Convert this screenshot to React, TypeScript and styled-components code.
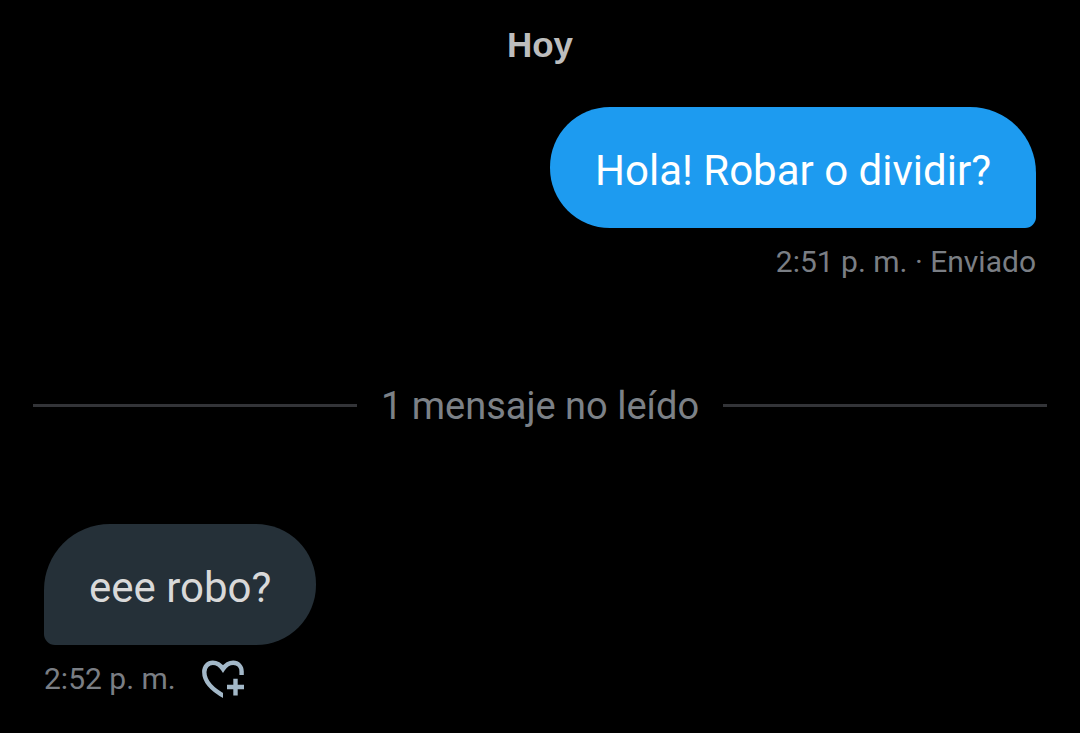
import React from "react";
import styled, { createGlobalStyle } from "styled-components";

const GlobalStyle = createGlobalStyle`
  *, *::before, *::after { box-sizing: border-box; }
  body {
    margin: 0;
    background: #000;
    font-family: Roboto, "Liberation Sans", Arial, sans-serif;
  }
`;

const Conversation = styled.main`
  display: flex;
  flex-direction: column;
  min-height: 100vh;
  padding-top: 24px;
`;

const DayHeading = styled.h1`
  margin: 0;
  color: #bdbdbd;
  font-family: "Liberation Sans", Arial, sans-serif;
  font-size: 35px;
  font-weight: 700;
  line-height: 42px;
  text-align: center;
`;

const Message = styled.article<{ $own?: boolean }>`
  display: flex;
  flex-direction: column;
  align-items: ${({ $own }) => ($own ? "flex-end" : "flex-start")};
  padding: 0 44px;
  margin-top: ${({ $own }) => ($own ? "41px" : "94px")};
`;

const Bubble = styled.p<{ $own?: boolean }>`
  margin: 0;
  padding: 40px 45px 33px;
  border-radius: ${({ $own }) => ($own ? "60px 66px 11px 60px" : "66px 60px 60px 11px")};
  background: ${({ $own }) => ($own ? "#1d9bf0" : "#253038")};
  color: ${({ $own }) => ($own ? "#fff" : "#d9d9d9")};
  font-size: 42px;
  line-height: 48px;
`;

const Meta = styled.footer`
  display: flex;
  align-items: center;
  gap: 24px;
  height: 40px;
  margin-top: 14px;
  color: #7a7e84;
  font-size: 30px;
  line-height: 40px;
`;

const UnreadDivider = styled.div`
  display: flex;
  align-items: center;
  gap: 24px;
  margin-top: 98px;
  padding: 0 33px;
  color: #7c8187;
  font-size: 38px;
  line-height: 48px;

  &::before, &::after {
    content: "";
    flex: 1;
    height: 3px;
    background: #333438;
  }
`;

const UnreadLabel = styled.span`
  padding-top: 2px;
`;

const ReactButton = styled.button`
  display: flex;
  padding: 0;
  border: 0;
  background: none;
  color: #a3b8c8;
  cursor: pointer;
`;

const HeartPlusIcon = () => (
  <svg width="48" height="44" viewBox="0 0 48 44" fill="none" stroke="currentColor" strokeWidth="4.4" aria-hidden="true">
    <clipPath id="heart-edge">
      <path d="M0 0H48V18H23V44H0Z" />
    </clipPath>
    <path
      clipPath="url(#heart-edge)"
      d="M41.6 20V14.6C41.6 9.2 38 5.8 33.2 5.8C29 5.8 25.5 8.3 23 12C20.5 8.3 16.8 5.8 12.8 5.8C8 5.8 4.3 9.6 4.3 15C4.3 24.2 11.5 32.3 25 39.6"
    />
    <path d="M27 30H44M35.5 21.7V38.5" />
  </svg>
);

export default function App() {
  return (
    <>
      <GlobalStyle />
      <Conversation>
        <DayHeading>Hoy</DayHeading>
        <Message $own>
          <Bubble $own>Hola! Robar o dividir?</Bubble>
          <Meta>2:51 p. m. · Enviado</Meta>
        </Message>
        <UnreadDivider>
          <UnreadLabel>1 mensaje no leído</UnreadLabel>
        </UnreadDivider>
        <Message>
          <Bubble>eee robo?</Bubble>
          <Meta>
            <time>2:52 p. m.</time>
            <ReactButton type="button" aria-label="Reaccionar">
              <HeartPlusIcon />
            </ReactButton>
          </Meta>
        </Message>
      </Conversation>
    </>
  );
}
